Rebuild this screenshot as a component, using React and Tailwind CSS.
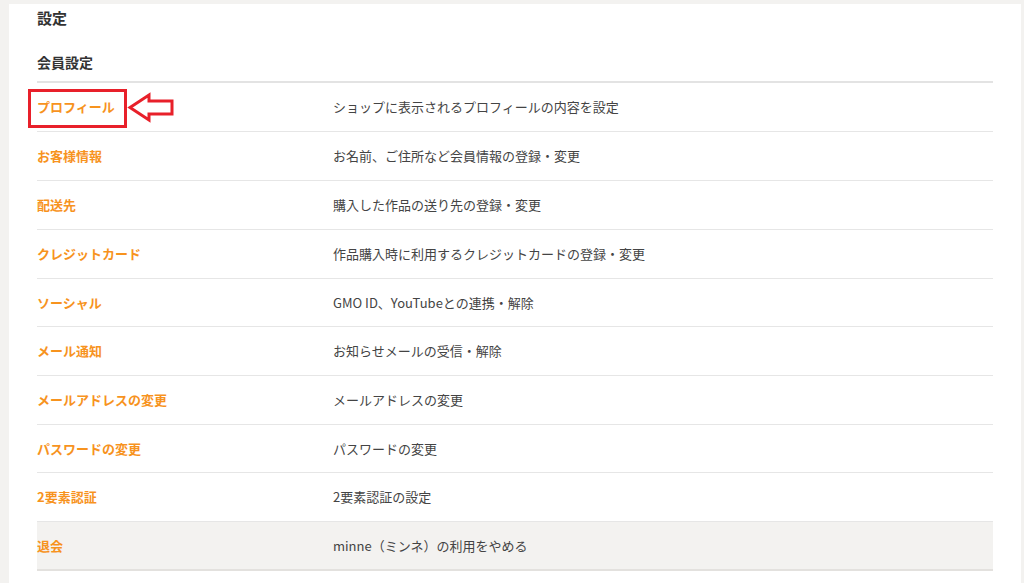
import React from "react";

const rows = [
  { label: "プロフィール", desc: "ショップに表示されるプロフィールの内容を設定", marked: true },
  { label: "お客様情報", desc: "お名前、ご住所など会員情報の登録・変更" },
  { label: "配送先", desc: "購入した作品の送り先の登録・変更" },
  { label: "クレジットカード", desc: "作品購入時に利用するクレジットカードの登録・変更" },
  { label: "ソーシャル", desc: "GMO ID、YouTubeとの連携・解除", short: true },
  { label: "メール通知", desc: "お知らせメールの受信・解除" },
  { label: "メールアドレスの変更", desc: "メールアドレスの変更" },
  { label: "パスワードの変更", desc: "パスワードの変更", short: true },
  { label: "2要素認証", desc: "2要素認証の設定" },
  { label: "退会", desc: "minne（ミンネ）の利用をやめる", last: true },
];

const Arrow = () => (
  <svg width="49" height="31" viewBox="0 0 49 31" className="absolute left-[90px] top-[9px]">
    <path
      d="M3 15.5 L22 3 L22 9 L45 9 L45 22 L22 22 L22 28 Z"
      fill="white"
      stroke="#e8202a"
      strokeWidth="3"
    />
  </svg>
);

const Row = ({ row }) => (
  <div
    className={
      "relative flex items-center " +
      (row.short ? "h-[48px] " : "h-[49px] ") +
      (row.last ? "bg-[#f3f2f0] border-b-2 border-[#e3e1de]" : "border-b border-[#e6e6e6]")
    }
  >
    <div className="w-[296px] shrink-0 text-[13px] font-bold text-[#f7931e]">{row.label}</div>
    <div className="text-[13px] text-[#444]">{row.desc}</div>
    {row.marked && (
      <>
        <div className="absolute left-[-9px] top-[6px] w-[99px] h-[39px] border-[3px] border-[#e8202a]" />
        <Arrow />
      </>
    )}
  </div>
);

export default function App() {
  return (
    <div
      className="min-h-[583px] bg-[#f3f2f0] pt-[4px] pl-[9px] pr-[3px]"
      style={{ fontFamily: '"Noto Sans CJK JP", "Noto Sans", sans-serif' }}
    >
      <div className="bg-white min-h-[579px] px-[28px] pt-[4px]">
        <div className="leading-[20px] text-[15px] font-bold text-[#333]">設定</div>
        <div className="mt-[24px] mb-[9px] leading-[20px] text-[14px] font-bold text-[#333]">会員設定</div>
        <div className="border-t-2 border-[#e3e3e3]">
          {rows.map((r) => (
            <Row key={r.label} row={r} />
          ))}
        </div>
      </div>
    </div>
  );
}
